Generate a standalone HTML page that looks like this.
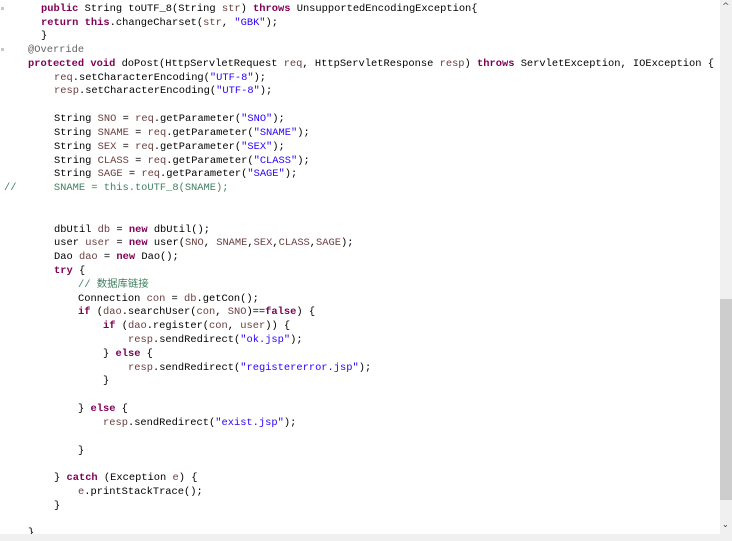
<!DOCTYPE html>
<html><head><meta charset="utf-8"><style>
body{margin:0;width:732px;height:541px;background:#fff;overflow:hidden;position:relative;font-family:"Liberation Mono","Noto Sans CJK SC",monospace;font-size:10.4px;color:#000}
.w{position:absolute;left:0;top:1px;width:720px;height:533px}
.l{position:absolute;white-space:pre;height:14px;line-height:14px}
.k{color:#7f0055;font-weight:bold}.s{color:#2a00ff}.v{color:#6a3e3e}.c{color:#3f7f5f}.a{color:#646464}
#sb{position:absolute;left:720px;top:0;width:12px;height:534px;background:#f0f0f0}
#th{position:absolute;left:720px;top:299px;width:12px;height:201px;background:#cdcdcd}
#bt{position:absolute;left:0;top:534px;width:732px;height:7px;background:#f0f0f0}
.m{position:absolute;left:1px;width:3px;height:3px;background:#c8c8c8}
</style></head><body>
<div class="w">
<div class="m" style="top:6px"></div><div class="m" style="top:47px"></div>
<div class="l" style="top:1px;left:41px"><span class="k">public</span> String toUTF_8(String <span class="v">str</span>) <span class="k">throws</span> UnsupportedEncodingException{</div>
<div class="l" style="top:15px;left:41px"><span class="k">return</span> <span class="k">this</span>.changeCharset(<span class="v">str</span>, <span class="s">"GBK"</span>);</div>
<div class="l" style="top:28px;left:41px">}</div>
<div class="l a" style="top:42px;left:28px">@Override</div>
<div class="l" style="top:56px;left:28px"><span class="k">protected</span> <span class="k">void</span> doPost(HttpServletRequest <span class="v">req</span>, HttpServletResponse <span class="v">resp</span>) <span class="k">throws</span> ServletException, IOException {</div>
<div class="l" style="top:70px;left:54px"><span class="v">req</span>.setCharacterEncoding(<span class="s">"UTF-8"</span>);</div>
<div class="l" style="top:83px;left:54px"><span class="v">resp</span>.setCharacterEncoding(<span class="s">"UTF-8"</span>);</div>
<div class="l" style="top:111px;left:54px">String <span class="v">SNO</span> = <span class="v">req</span>.getParameter(<span class="s">"SNO"</span>);</div>
<div class="l" style="top:125px;left:54px">String <span class="v">SNAME</span> = <span class="v">req</span>.getParameter(<span class="s">"SNAME"</span>);</div>
<div class="l" style="top:139px;left:54px">String <span class="v">SEX</span> = <span class="v">req</span>.getParameter(<span class="s">"SEX"</span>);</div>
<div class="l" style="top:153px;left:54px">String <span class="v">CLASS</span> = <span class="v">req</span>.getParameter(<span class="s">"CLASS"</span>);</div>
<div class="l" style="top:166px;left:54px">String <span class="v">SAGE</span> = <span class="v">req</span>.getParameter(<span class="s">"SAGE"</span>);</div>
<div class="l c" style="top:180px;left:4px">//      SNAME = this.toUTF_8(SNAME);</div>
<div class="l" style="top:222px;left:54px">dbUtil <span class="v">db</span> = <span class="k">new</span> dbUtil();</div>
<div class="l" style="top:235px;left:54px">user <span class="v">user</span> = <span class="k">new</span> user(<span class="v">SNO</span>, <span class="v">SNAME</span>,<span class="v">SEX</span>,<span class="v">CLASS</span>,<span class="v">SAGE</span>);</div>
<div class="l" style="top:249px;left:54px">Dao <span class="v">dao</span> = <span class="k">new</span> Dao();</div>
<div class="l" style="top:263px;left:54px"><span class="k">try</span> {</div>
<div class="l c" style="top:277px;left:78px">// 数据库链接</div>
<div class="l" style="top:291px;left:78px">Connection <span class="v">con</span> = <span class="v">db</span>.getCon();</div>
<div class="l" style="top:304px;left:78px"><span class="k">if</span> (<span class="v">dao</span>.searchUser(<span class="v">con</span>, <span class="v">SNO</span>)==<span class="k">false</span>) {</div>
<div class="l" style="top:318px;left:103px"><span class="k">if</span> (<span class="v">dao</span>.register(<span class="v">con</span>, <span class="v">user</span>)) {</div>
<div class="l" style="top:332px;left:128px"><span class="v">resp</span>.sendRedirect(<span class="s">"ok.jsp"</span>);</div>
<div class="l" style="top:346px;left:103px">} <span class="k">else</span> {</div>
<div class="l" style="top:360px;left:128px"><span class="v">resp</span>.sendRedirect(<span class="s">"registererror.jsp"</span>);</div>
<div class="l" style="top:373px;left:103px">}</div>
<div class="l" style="top:401px;left:78px">} <span class="k">else</span> {</div>
<div class="l" style="top:415px;left:103px"><span class="v">resp</span>.sendRedirect(<span class="s">"exist.jsp"</span>);</div>
<div class="l" style="top:443px;left:78px">}</div>
<div class="l" style="top:470px;left:54px">} <span class="k">catch</span> (Exception <span class="v">e</span>) {</div>
<div class="l" style="top:484px;left:78px"><span class="v">e</span>.printStackTrace();</div>
<div class="l" style="top:498px;left:54px">}</div>
<div class="l" style="top:525px;left:28px">}</div>
</div>
<div id="sb"></div><div id="th"></div><div id="bt"></div>
<div style="position:absolute;left:722px;top:2px;font-size:9px;color:#555;font-family:'DejaVu Sans'">^</div>
<div style="position:absolute;left:722px;top:520px;font-size:8px;color:#333;font-family:'DejaVu Sans'">⌄</div>
</body></html>
